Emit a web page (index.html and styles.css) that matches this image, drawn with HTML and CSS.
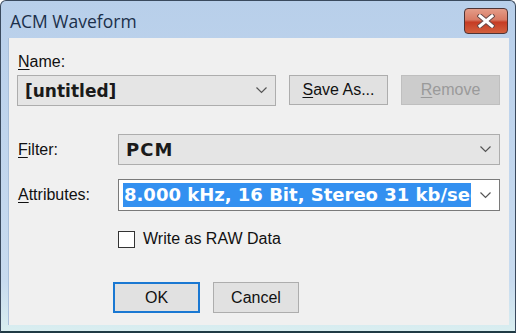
FILE: index.html
```html
<!DOCTYPE html>
<html>
<head>
  <title>ACM Waveform</title>
  <link rel="stylesheet" href="styles.css">
</head>
<body>
  <div class="window">
    <div class="titlebar">
      <span class="title">ACM Waveform</span>
      <div class="close">
        <svg width="18" height="14" viewBox="0 0 18 14">
          <path d="M3 2 L15 12 M15 2 L3 12" stroke="#6a4a48" stroke-width="5" stroke-linecap="square"/>
          <path d="M3 2 L15 12 M15 2 L3 12" stroke="#ffffff" stroke-width="3" stroke-linecap="square"/>
        </svg>
      </div>
    </div>

    <div class="client">
      <div class="name-label"><u>N</u>ame:</div>
      <div class="name-row">
        <div class="combo name-combo">
          <span class="combo-text">[untitled]</span>
          <svg class="chevron" width="11" height="7" viewBox="0 0 11 7"><path d="M0.5 0.5 L5.5 5.5 L10.5 0.5" fill="none" stroke="#555" stroke-width="1.2"/></svg>
        </div>
        <div class="btn"><u>S</u>ave As...</div>
        <div class="btn disabled"><u>R</u>emove</div>
      </div>

      <div class="field-row filter-row">
        <div class="field-label"><u>F</u>ilter:</div>
        <div class="combo wide">
          <span class="combo-text large">PCM</span>
          <svg class="chevron" width="11" height="7" viewBox="0 0 11 7"><path d="M0.5 0.5 L5.5 5.5 L10.5 0.5" fill="none" stroke="#555" stroke-width="1.2"/></svg>
        </div>
      </div>

      <div class="field-row attr-row">
        <div class="field-label"><u>A</u>ttributes:</div>
        <div class="combo wide edit">
          <span class="selected">8.000 kHz, 16 Bit, Stereo 31 kb/sec</span>
          <svg class="chevron" width="11" height="7" viewBox="0 0 11 7"><path d="M0.5 0.5 L5.5 5.5 L10.5 0.5" fill="none" stroke="#555" stroke-width="1.2"/></svg>
        </div>
      </div>

      <div class="check-row">
        <span class="checkbox"></span>
        <span>Write as RAW Data</span>
      </div>

      <div class="button-row">
        <div class="btn ok">OK</div>
        <div class="btn cancel">Cancel</div>
      </div>
    </div>
  </div>
</body>
</html>
```

FILE: styles.css
```css
body {
  margin: 0;
  font-family: "Liberation Sans", Arial, sans-serif;
  font-size: 16px;
  color: #111;
}

.window {
  width: 516px;
  height: 333px;
  box-sizing: border-box;
  border: 1px solid #3a4a5e;
  border-bottom: 2px solid #1f3a44;
  border-radius: 6px 6px 0 0;
  background: linear-gradient(#b8cfea, #c0d5ed 40%, #c8dbef 85%, #d9eef0);
  padding: 0 6px 6px 7px;
}

.titlebar {
  height: 37px;
  display: flex;
  align-items: center;
  justify-content: space-between;
}

.title {
  font-family: "Open Sans", sans-serif;
  font-size: 17.5px;
  color: #1b2f4a;
  margin-left: 2px;
  margin-top: 3px;
}

.close {
  width: 42px;
  height: 24px;
  margin-top: 3px;
  margin-right: 1px;
  border: 1px solid #4d3436;
  border-radius: 4px;
  background: linear-gradient(#e49c88, #d87a64 45%, #c63c24 55%, #d2603e);
  display: flex;
  align-items: center;
  justify-content: center;
}

.client {
  height: 287px;
  box-sizing: border-box;
  background: #f0f0f0;
  padding: 15px 9px 0 8px;
  border-left: 1px solid #aac0da;
}

.name-label {
  line-height: 18px;
  margin-left: 1px;
}

.name-row {
  display: flex;
  gap: 13px;
  margin-top: 4px;
  align-items: flex-start;
}

.combo {
  box-sizing: border-box;
  height: 31px;
  border: 1px solid #adadad;
  background: #e5e5e5;
  display: flex;
  align-items: center;
  justify-content: space-between;
  padding: 0 8px 0 7px;
}

.name-combo {
  width: 259px;
}

.combo-text {
  font-family: "DejaVu Sans", sans-serif;
  font-weight: bold;
  font-size: 17px;
  color: #1a1a1a;
}

.combo-text.large {
  font-size: 18px;
  letter-spacing: 1px;
}

.chevron {
  flex: none;
}

.btn {
  box-sizing: border-box;
  width: 99px;
  height: 30px;
  border: 1px solid #adadad;
  background: #e1e1e1;
  display: flex;
  align-items: center;
  justify-content: center;
}

.btn.disabled {
  background: #cccccc;
  border-color: #bfbfbf;
  color: #9a9a9a;
}

u {
  text-decoration-thickness: 1px;
  text-underline-offset: 2px;
}

.field-row {
  display: flex;
  align-items: center;
}

.filter-row {
  margin-top: 28px;
}

.attr-row {
  margin-top: 14px;
}

.field-label {
  width: 100px;
  padding-left: 1px;
}

.wide {
  flex: 1;
}

.combo.edit {
  height: 32px;
  background: #ffffff;
  border-color: #7a7a7a;
  padding: 0 8px 0 4px;
}

.selected {
  width: 348px;
  height: 24px;
  line-height: 24px;
  overflow: hidden;
  white-space: nowrap;
  background: #3390f0;
  color: #ffffff;
  font-family: "DejaVu Sans", sans-serif;
  font-weight: bold;
  font-size: 18px;
  padding-left: 1px;
  box-sizing: border-box;
}

.check-row {
  display: flex;
  align-items: center;
  gap: 8px;
  margin-top: 19px;
  padding-left: 101px;
}

.checkbox {
  width: 17px;
  height: 17px;
  box-sizing: border-box;
  border: 1px solid #333;
  background: #fff;
}

.button-row {
  display: flex;
  gap: 13px;
  margin-top: 34px;
  padding-left: 96px;
}

.btn.ok {
  width: 87px;
  height: 31px;
  border: 2px solid #1a78d2;
}

.btn.cancel {
  width: 86px;
  height: 31px;
}
```
